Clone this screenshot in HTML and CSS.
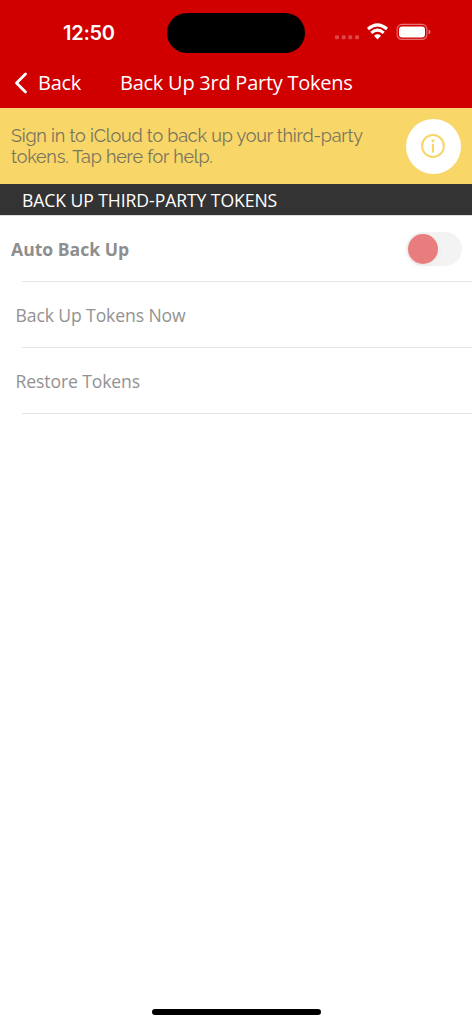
FILE: index.html
```html
<!DOCTYPE html>
<html lang="en">
<head>
<meta charset="utf-8">
<title>Back Up 3rd Party Tokens</title>
<link rel="stylesheet" href="styles.css">
</head>
<body>
<div class="screen">
  <header class="header">
    <div class="status">
      <span class="time">12:50</span>
      <span class="island"></span>
      <svg class="indicators" width="98" height="24" viewBox="0 0 98 24">
        <g fill="#fff" fill-opacity=".28"><rect x="1" y="13.3" width="4" height="4" rx="1.3"/><rect x="7.7" y="13.3" width="4" height="4" rx="1.3"/><rect x="14.3" y="13.3" width="4" height="4" rx="1.3"/><rect x="21" y="13.3" width="4" height="4" rx="1.3"/></g>
        <g fill="none" stroke="#fff" stroke-width="3"><path d="M34 7Q43.5-1.2 53 7"/><path d="M37.3 10.8Q43.5 5.4 49.7 10.8"/></g>
        <path d="M40 13.7Q43.5 10.9 47 13.7L43.5 17.4Z" fill="#fff"/>
        <rect x="63.1" y="2.4" width="29.8" height="15" rx="4.8" fill="none" stroke="#fff" stroke-opacity=".45" stroke-width="1.1"/>
        <rect x="65" y="4.4" width="26" height="11" rx="3.2" fill="#fff"/>
        <path d="M94.6 7.5Q96.5 8.1 96.5 10T94.6 12.5Z" fill="#fff" fill-opacity=".5"/>
      </svg>
    </div>
    <nav class="nav">
      <svg class="chevron" width="14" height="22" viewBox="0 0 14 22"><path d="M11.5 2 2.5 11l9 9" fill="none" stroke="#fff" stroke-width="2.8" stroke-linecap="round" stroke-linejoin="round"/></svg>
      <span class="back">Back</span>
      <span class="title">Back Up 3rd Party Tokens</span>
    </nav>
  </header>
  <section class="banner">
    <p class="message"><span class="line first">Sign in to iCloud to back up your third-party</span><span class="line second">tokens. Tap here for help.</span></p>
    <span class="info">
      <svg width="24" height="24" viewBox="0 0 24 24"><circle cx="12" cy="12" r="10.9" fill="none" stroke="#f8d668" stroke-width="2"/><circle cx="12" cy="6.7" r="1.5" fill="#f8d668"/><path d="M12 10.8v7" stroke="#f8d668" stroke-width="2.2" stroke-linecap="round"/></svg>
    </span>
  </section>
  <h2 class="section-title"><span>BACK UP THIRD-PARTY TOKENS</span></h2>
  <main class="rows">
    <div class="row auto"><span class="label">Auto Back Up</span><span class="switch"><span class="knob"></span></span></div>
    <div class="row"><span class="label now">Back Up Tokens Now</span></div>
    <div class="row"><span class="label restore">Restore Tokens</span></div>
  </main>
  <footer class="home"><span class="indicator"></span></footer>
</div>
</body>
</html>
```
FILE: styles.css
```css
* { box-sizing: border-box; }
body { margin: 0; font-family: "Open Sans", "Noto Sans", sans-serif; background: #fff; }
.screen { width: 472px; height: 1024px; display: flex; flex-direction: column; overflow: hidden; }
.header { height: 107.5px; background: #d00000; color: #fff; }
.status { height: 58px; display: flex; align-items: flex-start; padding-left: 63px; }
.time { width: 104px; padding-top: 21px; font: 600 20px/25px Inter, sans-serif; letter-spacing: -.25px; }
.island { width: 138px; height: 40px; margin-top: 13px; border-radius: 20px; background: #000; }
.indicators { margin: 22px 0 0 29px; }
.nav { height: 50px; display: flex; align-items: center; padding-left: 14px; font-size: 20px; line-height: 28px; letter-spacing: -.25px; white-space: nowrap; }
.back { width: 82px; margin-left: 10px; }
.banner { height: 76.7px; display: flex; justify-content: space-between; padding: 11px 11.5px 0 11px; background: #f8d668; }
.message { margin: 6px 0 0; font: 400 18px/21px Raleway, Lato, sans-serif; letter-spacing: -.21px; color: #77745f; white-space: nowrap; }
.line { display: block; }
.info { width: 55px; height: 55px; display: grid; place-items: center; border-radius: 50%; background: #fff; }
.section-title { height: 31px; margin: 0; padding-left: 22px; background: #333; color: #fff; font-size: 17.6px; font-weight: 400; line-height: 32px; letter-spacing: -.08px; }
.rows { border-top: 1px solid #ddd; }
.row { height: 66px; display: flex; align-items: center; justify-content: space-between; padding: 0 10px 0 15.5px; color: #929292; font-size: 17.6px; letter-spacing: -.12px; background: linear-gradient(#e5e5e5, #e5e5e5) 22px 100% / 100% 1px no-repeat; }
.auto { padding-left: 11px; font-weight: 700; letter-spacing: 0; color: #8e8e8e; }
.auto .label { margin-top: -1px; }
.switch { width: 56px; height: 34px; padding: 2px; border-radius: 17px; background: #f3f3f3; }
.knob { display: block; width: 30px; height: 30px; border-radius: 50%; background: #e97d7d; box-shadow: 0 2px 6px #0000000d; }
.home { margin-top: auto; height: 15px; display: flex; justify-content: center; }
.indicator { width: 169px; height: 6px; border-radius: 3px; background: #000; }
```
